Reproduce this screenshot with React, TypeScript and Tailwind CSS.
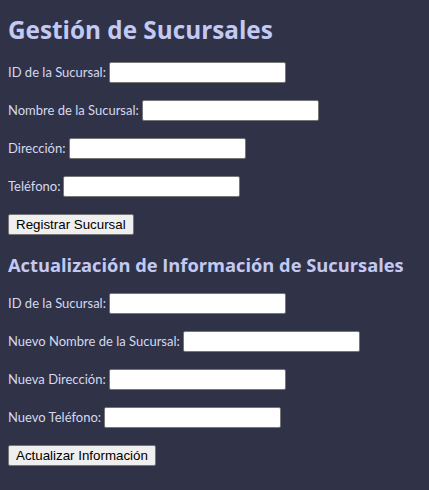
import React from "react";

const Field = ({ label, inputW = "w-[177px]" }: { label: string; inputW?: string }) => (
  <div className="flex items-center h-[21px]">
    <label className="text-[13px] text-[#d4d8f0] mr-[3px]">{label}</label>
    <input
      type="text"
      className={`${inputW} h-[21px] bg-white border border-[#767676] rounded-[2px] px-[2px] text-[13px] text-black`}
    />
  </div>
);

const Boton = ({ children }: { children: React.ReactNode }) => (
  <div className="h-[21px] flex">
    <button className="h-[21px] px-[7px] bg-[#efefef] border border-[#767676] rounded-[2px] text-[13.33px] text-black leading-none [font-family:'Liberation_Sans',Arial,sans-serif]">
      {children}
    </button>
  </div>
);

export default function App() {
  return (
    <div className="min-h-screen bg-[#303247] px-2 [font-family:Lato,'Open_Sans',sans-serif]">
      {/* Registro */}
      <h1 className="pt-[14px] h-[46px] leading-[32px] text-[24.3px] font-bold text-[#c3c9f2] [font-family:'Open_Sans',sans-serif]">
        Gestión de Sucursales
      </h1>
      <div className="mt-4 flex flex-col gap-[17px]">
        <Field label="ID de la Sucursal:" />
        <Field label="Nombre de la Sucursal:" />
        <Field label="Dirección:" />
        <Field label="Teléfono:" />
        <Boton>Registrar Sucursal</Boton>
      </div>

      {/* Actualización */}
      <h2 className="mt-[18px] h-[24px] leading-[24px] text-[18.3px] font-bold text-[#c3c9f2] [font-family:'Open_Sans',sans-serif]">
        Actualización de Información de Sucursales
      </h2>
      <div className="mt-4 flex flex-col gap-[17px]">
        <Field label="ID de la Sucursal:" />
        <Field label="Nuevo Nombre de la Sucursal:" />
        <Field label="Nueva Dirección:" />
        <Field label="Nuevo Teléfono:" />
        <Boton>Actualizar Información</Boton>
      </div>
    </div>
  );
}
